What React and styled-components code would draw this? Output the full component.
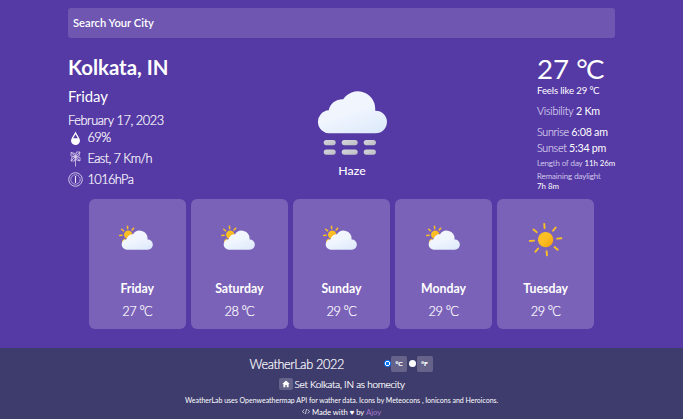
import React, { useState } from "react";
import styled, { createGlobalStyle, css } from "styled-components";

const GlobalStyle = createGlobalStyle`
  * { box-sizing: border-box; }
  body { margin: 0; background: #5539a5; color: #fff; font-family: Lato, sans-serif; font-size: 12px; overflow: hidden; }
  svg { display: block; }
`;

const Page = styled.div`
  height: 419px;
  display: flex;
  flex-direction: column;
`;

const Main = styled.main`
  width: 547px;
  height: 347.5px;
  margin-left: 68px;
  padding-top: 8px;
`;

const Search = styled.input`
  display: block;
  width: 100%;
  height: 29.5px;
  padding: 0 5px;
  border: 0;
  border-radius: 3px;
  background: #6f57b1;
  color: #fff;
  font: 600 11.2px Lato, sans-serif;
  &::placeholder { color: #fff; opacity: 1; }
`;

const Current = styled.section`
  display: grid;
  grid-template-columns: 200px 168px 1fr;
  height: 161px;
`;

const Place = styled.div`
  padding-top: 15.5px;
`;

const lightText = css`
  font-weight: 300;
  -webkit-text-stroke: 0.2px currentColor;
`;

const Line = styled.div`
  height: ${(p) => p.$h}px;
  line-height: ${(p) => p.$h}px;
  font-size: ${(p) => p.$size}px;
  font-weight: ${(p) => p.$weight || 400};
  letter-spacing: ${(p) => p.$track || 0}px;
  white-space: nowrap;
  ${(p) => p.$light && lightText}
`;

const Readings = styled.div`
  padding-top: 0.5px;
`;

const Reading = styled.div`
  display: grid;
  grid-template-columns: 15px auto;
  column-gap: 4.5px;
  align-items: center;
  height: 21.2px;
  font-size: 12.8px;
  letter-spacing: -0.6px;
  line-height: 21px;
  ${lightText}
`;

const Sky = styled.div`
  padding-top: 53px;
  text-align: center;
`;

const SkyArt = styled.svg`
  width: 80px;
  height: 66px;
  margin: 0 auto;
`;

const Details = styled.div`
  padding: 15px 0 0 101px;
`;

const Label = styled.span`
  color: #d3caea;
  ${lightText}
`;

const DegreeSign = styled.span`
  letter-spacing: -0.06em;
`;

const Forecast = styled.section`
  display: grid;
  grid-template-columns: repeat(5, 97.5px);
  column-gap: 4.6px;
  margin-left: 20.5px;
`;

const Card = styled.article`
  height: 130px;
  padding-top: 11.5px;
  border-radius: 6px;
  background: #7b62b9;
  text-align: center;
`;

const CardArt = styled.svg`
  width: 60px;
  height: 60px;
  margin: 0 auto 8px;
`;

const Footer = styled.footer`
  height: 71.5px;
  padding-top: 6px;
  background: #3e3c6d;
`;

const Row = styled.div`
  display: flex;
  align-items: center;
  height: ${(p) => p.$h}px;
  padding-left: ${(p) => p.$left}px;
  font-size: ${(p) => p.$size}px;
  letter-spacing: ${(p) => p.$track || 0}px;
  white-space: pre;
  ${(p) => p.$light && lightText}
`;

const Brand = styled.span`
  width: 134px;
`;

const Radio = styled.input`
  width: 7px;
  height: 7px;
  margin: 0 0.5px 0 0;
  border-radius: 50%;
  appearance: none;
  background: #fff;
  &:checked {
    background: radial-gradient(circle, #0b76f5 0 1.7px, #fff 2px 2.5px, #0b76f5 2.8px);
  }
`;

const chip = css`
  display: flex;
  align-items: center;
  justify-content: center;
  border: 0;
  border-radius: 2px;
  background: #65638a;
  color: #fff;
`;

const Unit = styled.label`
  ${chip}
  width: 16px;
  height: 16px;
  margin-right: 2px;
  font-size: 6.4px;
  font-weight: 700;
  letter-spacing: 0;
`;

const HomeButton = styled.button`
  ${chip}
  width: 14px;
  height: 12px;
  padding: 0;
  margin-right: 2px;
`;

const Author = styled.span`
  color: #a978cf;
`;

const HiddenDefs = styled.svg`
  position: absolute;
  width: 0;
  height: 0;
`;

function Gradients() {
  return (
    <HiddenDefs>
      <defs>
        <linearGradient id="cloud" x1="0.2" y1="0" x2="0.8" y2="1">
          <stop offset="0" stopColor="#f3f7fe" />
          <stop offset="0.5" stopColor="#f0f5fe" />
          <stop offset="1" stopColor="#deeafb" />
        </linearGradient>
        <linearGradient id="sun" x1="0" y1="0" x2="1" y2="1">
          <stop offset="0" stopColor="#fbbf24" />
          <stop offset="0.45" stopColor="#fbbf24" />
          <stop offset="1" stopColor="#f59e0b" />
        </linearGradient>
        <linearGradient id="mist" x1="0" y1="0" x2="1" y2="1">
          <stop offset="0" stopColor="#d4d7dd" />
          <stop offset="1" stopColor="#bebec1" />
        </linearGradient>
      </defs>
    </HiddenDefs>
  );
}

const CLOUD =
  "M57 20.5H56.5V18A17.4 17.4 0 0 0 24.5 9A13.5 13.5 0 0 0 10 20A11.5 11.5 0 0 0 11.5 43H57A11.25 11.25 0 0 0 57 20.5Z";

function Haze() {
  return (
    <SkyArt viewBox="0 0 80 66">
      <path transform="translate(6.7 -.7)" d={CLOUD} fill="url(#cloud)" />
      {[49, 58.5].map((y) => (
        <g key={y} fill="url(#mist)">
          <rect x="11.7" y={y} width="12" height="5.2" rx="2.6" />
          <rect x="29.7" y={y} width="16" height="5.2" rx="2.6" />
          <rect x="51.7" y={y} width="12.2" height="5.2" rx="2.6" />
        </g>
      ))}
    </SkyArt>
  );
}

function Sun({ cx, cy, r, inner, outer, width, turn }) {
  return (
    <g transform={`translate(${cx} ${cy}) rotate(${turn})`}>
      <circle r={r} fill="url(#sun)" />
      {[0, 45, 90, 135, 180, 225, 270, 315].map((a) => (
        <path
          key={a}
          d={`M0 ${-inner}V${-outer}`}
          transform={`rotate(${a})`}
          stroke="#fbbf24"
          strokeWidth={width}
          strokeLinecap="round"
        />
      ))}
    </g>
  );
}

function PartlyCloudy() {
  return (
    <CardArt viewBox="0 0 60 60">
      <Sun cx={21.2} cy={24.7} r={4.2} inner={6.1} outer={8.5} width={1.5} turn={-5} />
      <path transform="translate(15 20.2) scale(.452)" d={CLOUD} fill="url(#cloud)" />
    </CardArt>
  );
}

function Clear() {
  return (
    <CardArt viewBox="0 0 60 60">
      <Sun cx={29.6} cy={29.6} r={7.7} inner={11.6} outer={15.8} width={1.9} turn={-5} />
    </CardArt>
  );
}

function Drop() {
  return (
    <svg width="15" height="15" viewBox="0 0 15 15">
      <path d="M7.5 1.5C6 5 3 8 3 10.8a4.5 4.100 0 0 0 9 0C12 8 9 5 7.500 1.500Z" fill="#fff" />
      <path d="M7.500 4.300 5.200 8.200h4.600Z" fill="#5539a5" />
    </svg>
  );
}

function Pinwheel() {
  return (
    <svg width="15" height="17" viewBox="0 0 15 17" fill="none" stroke="#d9d1ec" strokeWidth=".8">
      <path d="M7.5 6.5V16.500M7.500 6.500 3 6V2.500L7 3.500ZM7.500 6.500 8.500 2H12l-1 4ZM7.500 6.500 12 7.500V11L8.500 10ZM7.500 6.500 6.500 11H3l1-4Z" />
      <path d="M3 2.500 7.500 6.500 12 2M12 11 7.500 6.500 3 11" />
    </svg>
  );
}

function Gauge() {
  return (
    <svg width="15" height="15" viewBox="0 0 15 15" fill="none" stroke="#ece7f7">
      <circle cx="7.5" cy="7.5" r="6.8" strokeWidth=".8" />
      <circle cx="7.5" cy="7.5" r="4.7" strokeWidth=".8" strokeDasharray="1.5 .5" />
      <path d="M7.5 4V11" strokeWidth="1.1" />
    </svg>
  );
}

function House() {
  return (
    <svg width="8" height="8" viewBox="0 0 8 8" fill="#fff">
      <path d="M4 .4.5 3.8l.5.5.4-.3V7.300H3.300V5h1.400v2.300h1.900V4l.4.300.500-.5Z" />
    </svg>
  );
}

function CodeMark() {
  return (
    <svg width="8" height="7" viewBox="0 0 8 7" fill="none" stroke="#fff" strokeWidth=".7">
      <path d="M2.2 1.5.5 3.5l1.7 2M5.8 1.5l1.7 2-1.7 2M4.6 1 3.4 6" />
    </svg>
  );
}

function Temp({ value }) {
  return (
    <>
      {value} <DegreeSign>°</DegreeSign>C
    </>
  );
}

const DAYS = [
  ["Friday", 27, PartlyCloudy],
  ["Saturday", 28, PartlyCloudy],
  ["Sunday", 29, PartlyCloudy],
  ["Monday", 29, PartlyCloudy],
  ["Tuesday", 29, Clear],
];

export default function App() {
  const [unit, setUnit] = useState("C");
  return (
    <Page>
      <GlobalStyle />
      <Gradients />
      <Main>
        <Search placeholder="Search Your City" />
        <Current>
          <Place>
            <Line $h={28} $size={20.4} $weight={700}>Kolkata, IN</Line>
            <Line $h={31.5} $size={14.9}>Friday</Line>
            <Line $h={14} $size={12.8} $track={-0.43} $light>February 17, 2023</Line>
            <Readings>
              <Reading><Drop />69%</Reading>
              <Reading><Pinwheel />East, 7 Km/h</Reading>
              <Reading><Gauge />1016hPa</Reading>
            </Readings>
          </Place>
          <Sky>
            <Haze />
            <Line $h={28} $size={12.3} $weight={500}>Haze</Line>
          </Sky>
          <Details>
            <Line $h={31} $size={27.7}><Temp value={27} /></Line>
            <Line $h={14} $size={9.6} $track={-0.13}>Feels like <Temp value={29} /></Line>
            <Line $h={26} $size={10.7} $track={-0.2}><Label>Visibility</Label> 2 Km</Line>
            <Line $h={16} $size={10.7} $track={-0.25}><Label>Sunrise</Label> 6:08 am</Line>
            <Line $h={16} $size={10.7} $track={-0.25}><Label>Sunset</Label> 5:34 pm</Line>
            <Line $h={14} $size={7.9} $track={-0.07}><Label>Length of day</Label> 11h 26m</Line>
            <Line $h={13} $size={7.9}><Label>Remaining daylight</Label></Line>
            <Line $h={7} $size={7.9}>7h 8m</Line>
          </Details>
        </Current>
        <Forecast>
          {DAYS.map(([day, temp, Art]) => (
            <Card key={day}>
              <Art />
              <Line $h={22} $size={12.3} $weight={700}>{day}</Line>
              <Line $h={23} $size={12.8} $track={-0.4} $light><Temp value={temp} /></Line>
            </Card>
          ))}
        </Forecast>
      </Main>
      <Footer>
        <Row $h={20} $left={249.5} $size={12.7} $track={-0.35} $light>
          <Brand>WeatherLab 2022</Brand>
          {["C", "F"].map((u) => (
            <React.Fragment key={u}>
              <Radio type="radio" id={u} name="unit" checked={unit === u} onChange={() => setUnit(u)} />
              <Unit htmlFor={u}>°{u}</Unit>
            </React.Fragment>
          ))}
        </Row>
        <Row $h={20} $left={278.5} $size={10} $track={-0.27} $light>
          <HomeButton aria-label="Set home city"><House /></HomeButton>
          Set Kolkata, IN as homecity
        </Row>
        <Row $h={12} $left={185} $size={6.97}>
          WeatherLab uses Openweathermap API for wather data. Icons by Meteocons , Ionicons and Heroicons.
        </Row>
        <Row $h={12} $left={302} $size={7.65}>
          <CodeMark /> Made with ♥ by <Author>Ajoy</Author>
        </Row>
      </Footer>
    </Page>
  );
}
